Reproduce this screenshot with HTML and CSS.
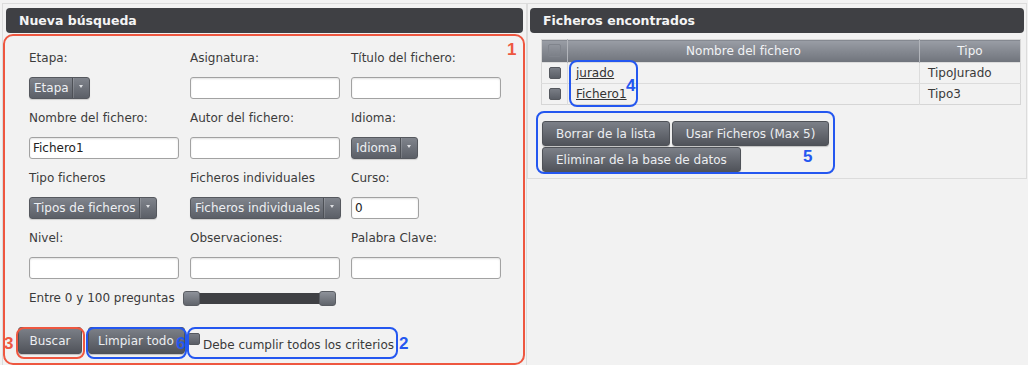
FILE: index.html
```html
<!DOCTYPE html>
<html lang="es">
<head>
<meta charset="utf-8">
<title>Búsqueda de ficheros</title>
<link rel="stylesheet" href="styles.css">
</head>
<body>
<div class="page">
  <section class="panel panel-left">
    <h2 class="panel-title">Nueva búsqueda</h2>
    <form class="search">
      <div class="grid">
        <div class="field"><label>Etapa:</label><span class="select">Etapa<i class="caret"></i></span></div>
        <div class="field"><label>Asignatura:</label><input class="text" type="text"></div>
        <div class="field"><label>Título del fichero:</label><input class="text" type="text"></div>

        <div class="field"><label>Nombre del fichero:</label><input class="text" type="text" value="Fichero1"></div>
        <div class="field"><label>Autor del fichero:</label><input class="text" type="text"></div>
        <div class="field"><label>Idioma:</label><span class="select">Idioma<i class="caret"></i></span></div>

        <div class="field"><label>Tipo ficheros</label><span class="select">Tipos de ficheros<i class="caret"></i></span></div>
        <div class="field"><label>Ficheros individuales</label><span class="select">Ficheros individuales<i class="caret"></i></span></div>
        <div class="field"><label>Curso:</label><input class="text text-short" type="text" value="0"></div>

        <div class="field"><label>Nivel:</label><input class="text" type="text"></div>
        <div class="field"><label>Observaciones:</label><input class="text" type="text"></div>
        <div class="field"><label>Palabra Clave:</label><input class="text" type="text"></div>
      </div>
      <div class="range-row">
        <span class="range-label">Entre 0 y 100 preguntas</span>
        <span class="slider"><span class="handle"></span><span class="track"></span><span class="handle"></span></span>
      </div>
      <div class="actions">
        <span class="btn btn-buscar">Buscar</span>
        <span class="btn btn-limpiar">Limpiar todo</span>
        <span class="check"><span class="box"></span><span class="check-text">Debe cumplir todos los criterios</span></span>
      </div>
    </form>
  </section>

  <section class="panel panel-right">
    <h2 class="panel-title">Ficheros encontrados</h2>
    <table class="files">
      <thead>
        <tr><th class="c-check"><span class="box box-head"></span></th><th class="c-name">Nombre del fichero</th><th class="c-type">Tipo</th></tr>
      </thead>
      <tbody>
        <tr><td class="c-check"><span class="box"></span></td><td class="c-name"><a href="#">jurado</a></td><td class="c-type">TipoJurado</td></tr>
        <tr><td class="c-check"><span class="box"></span></td><td class="c-name"><a href="#">Fichero1</a></td><td class="c-type">Tipo3</td></tr>
      </tbody>
    </table>
    <div class="file-actions">
      <span class="btn btn-r">Borrar de la lista</span>
      <span class="btn btn-r">Usar Ficheros (Max 5)</span>
      <span class="btn btn-r">Eliminar de la base de datos</span>
    </div>
  </section>
</div>

<div class="anno red a-form"></div>
<span class="num red-t n1">1</span>
<div class="anno red a-buscar"></div>
<span class="num red-t n3">3</span>
<div class="anno blue a-limpiar"></div>
<span class="num blue-t n6">6</span>
<div class="anno blue a-check"></div>
<span class="num blue-t n2">2</span>
<div class="anno blue a-links"></div>
<span class="num blue-t n4">4</span>
<div class="anno blue a-btns"></div>
<span class="num blue-t n5">5</span>
</body>
</html>
```

FILE: styles.css
```css
html, body {
  margin: 0;
  padding: 0;
  background: #f2f2f2;
  font-family: "DejaVu Sans", Verdana, sans-serif;
  font-size: 12px;
  color: #3a3a3a;
  overflow: hidden;
}

.page {
  display: flex;
  align-items: flex-start;
  padding: 3px 0 0 2px;
  height: 362px;
  overflow: hidden;
}

.panel {
  box-sizing: border-box;
  border: 1px solid #dcdcdc;
  padding: 4px 3px 0;
}

.panel-left {
  width: 525px;
  height: 362px;
  border-bottom: none;
}

.panel-right {
  width: 500px;
  height: 176px;
  padding: 4px 2px 0;
}

.panel-title {
  margin: 0;
  height: 25px;
  line-height: 25px;
  background: #3f4044;
  border-radius: 4px;
  color: #f4f4f4;
  font-size: 12.5px;
  font-weight: bold;
  padding-left: 13px;
}

/* search form */
.search {
  padding-top: 18px;
}

.grid {
  margin-left: 23px;
  display: grid;
  grid-template-columns: 150px 150px 150px;
  column-gap: 11px;
  row-gap: 12px;
}

.field label {
  display: block;
  line-height: 15px;
  margin-bottom: 11px;
  color: #3c3c3c;
}

.text {
  box-sizing: border-box;
  display: block;
  width: 150px;
  height: 22px;
  margin: 0;
  padding: 0 3px;
  border: 1px solid #a2a2a2;
  border-radius: 3px;
  background: #fff;
  box-shadow: inset 0 1px 2px rgba(0,0,0,0.12);
  font-family: "DejaVu Sans", Verdana, sans-serif;
  font-size: 12px;
  color: #222;
}

.text-short {
  width: 68px;
}

.select {
  box-sizing: border-box;
  display: inline-flex;
  align-items: center;
  height: 22px;
  padding-left: 4px;
  border-radius: 3px;
  background: linear-gradient(#80848c, #5b5f67);
  border: 1px solid #55585e;
  color: #eef0f3;
  font-size: 12px;
  line-height: 20px;
  white-space: nowrap;
  box-shadow: 0 1px 1px rgba(0,0,0,0.15);
}

.caret {
  position: relative;
  display: block;
  width: 16px;
  height: 20px;
  margin-left: 3px;
  border-left: 1px solid #4d5056;
  box-shadow: inset 1px 0 0 rgba(255,255,255,0.15);
}

.caret::after {
  content: "";
  position: absolute;
  left: 6px;
  top: 7px;
  border-left: 2px solid transparent;
  border-right: 2px solid transparent;
  border-top: 3px solid #dfe1e4;
}

/* range */
.range-row {
  margin: 12px 0 0 23px;
  display: flex;
  align-items: center;
  height: 15px;
}

.range-label {
  line-height: 15px;
}

.slider {
  display: flex;
  align-items: center;
  margin-left: 8px;
  width: 153px;
  height: 15px;
}

.track {
  flex: 1;
  height: 11px;
  background: #3f4044;
  margin: 0 -2px;
}

.handle {
  position: relative;
  z-index: 1;
  width: 17px;
  height: 15px;
  box-sizing: border-box;
  border-radius: 3px;
  border: 1px solid #5a5d63;
  background: linear-gradient(#8e929a, #61656c);
}

/* actions */
.actions {
  margin: 21px 0 0 12px;
  display: flex;
  align-items: flex-start;
}

.btn {
  box-sizing: border-box;
  display: inline-flex;
  align-items: center;
  justify-content: center;
  height: 27px;
  padding: 0 11px;
  border-radius: 3px;
  border: 1px solid #4f5258;
  background: linear-gradient(#7c8088, #50535a);
  color: #eceef1;
  font-size: 12px;
  white-space: nowrap;
  box-shadow: 0 1px 1px rgba(0,0,0,0.2);
}

.btn-buscar {
  width: 64px;
}

.btn-limpiar {
  width: 97px;
  margin-left: 6px;
  justify-content: flex-start;
  padding-left: 9px;
}

.check {
  display: inline-flex;
  align-items: flex-start;
  margin-left: 3px;
  height: 27px;
}

.box {
  display: inline-block;
  width: 12px;
  height: 12px;
  box-sizing: border-box;
  border-radius: 2px;
  background: linear-gradient(#7a7e86, #5a5e66);
  border: 1px solid #55585e;
}

.check .box {
  margin-top: 6px;
  margin-right: 3px;
}

.check-text {
  margin-top: 11px;
  line-height: 15px;
}

/* table */
.files {
  margin: 6px 0 0 11px;
  width: 480px;
  border-collapse: collapse;
  border: 1px solid #d6d6d6;
}

.files th {
  height: 22px;
  padding: 0;
  background: linear-gradient(#9a9ea6, #6f737b);
  color: #f2f3f5;
  font-weight: normal;
  font-size: 12px;
  border-left: 1px solid #b2b5bb;
  text-align: center;
}

.files th:first-child {
  border-left: none;
}

.files td {
  height: 20px;
  padding: 0 0 0 8px;
  border-top: 1px solid #dcdcdc;
  border-left: 1px solid #dcdcdc;
  line-height: 20px;
}

.files td:first-child {
  border-left: none;
}

.files .c-check {
  width: 25px;
  padding: 0;
  text-align: center;
}

.files .c-check .box {
  vertical-align: middle;
  margin-top: -2px;
}

.files .c-type {
  width: 92px;
}

.box-head {
  background: transparent;
  border: 1px solid #80848c;
  width: 13px;
  height: 13px;
}

.files a {
  color: #333;
  text-decoration: underline;
}

.file-actions {
  margin: 16px 0 0 12px;
  width: 292px;
  display: flex;
  flex-wrap: wrap;
  column-gap: 2px;
  row-gap: 1px;
}

.btn-r {
  height: 25px;
  padding: 0 13px;
}

/* annotations overlay */
.anno {
  position: absolute;
  z-index: 5;
  box-sizing: border-box;
  border: 2px solid;
  border-radius: 8px;
}

.red { border-color: #ee5740; }
.blue { border-color: #2457f0; }

.num {
  position: absolute;
  z-index: 6;
  font-family: "Liberation Sans", Arial, sans-serif;
  font-weight: bold;
  font-size: 17px;
  line-height: 17px;
}

.red-t { color: #ee5740; }
.blue-t { color: #2457f0; }

.a-form { left: 3px; top: 34px; width: 522px; height: 331px; border-radius: 10px; }
.n1 { left: 507px; top: 41px; }
.a-buscar { left: 16px; top: 327px; width: 69px; height: 32px; }
.n3 { left: 4px; top: 335px; }
.a-limpiar { left: 86px; top: 327px; width: 101px; height: 32px; }
.n6 { left: 176px; top: 335px; }
.a-check { left: 187px; top: 327px; width: 211px; height: 32px; }
.n2 { left: 399px; top: 335px; }
.a-links { left: 569px; top: 60px; width: 69px; height: 47px; }
.n4 { left: 626px; top: 77px; }
.a-btns { left: 536px; top: 111px; width: 299px; height: 63px; }
.n5 { left: 803px; top: 148px; }
```
